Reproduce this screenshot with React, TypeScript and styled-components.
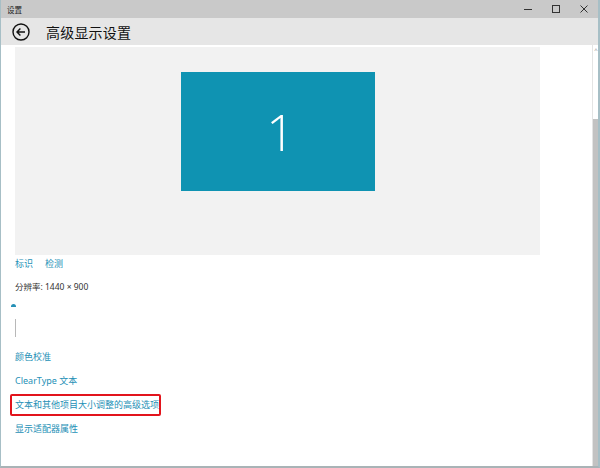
import * as React from "react";
import styled, { createGlobalStyle } from "styled-components";

const GlobalStyle = createGlobalStyle`
  html, body { margin: 0; padding: 0; background: #ffffff; }
  body { font-family: "Noto Sans", "Noto Sans CJK SC", sans-serif; }
`;

const colors = {
  titleBar: "#c9c9c9",
  header: "#e6e6e6",
  preview: "#f2f2f2",
  monitor: "#0f93b2",
  link: "#2590b6",
  text: "#333333",
  frame: "#a7bfc6",
  red: "#e2141c",
};

const Window = styled.div`
  width: 600px;
  height: 468px;
  box-sizing: border-box;
  display: flex;
  flex-direction: column;
  border-left: 1px solid ${colors.frame};
  border-right: 2px solid ${colors.frame};
  border-bottom: 2px solid #a9b3b6;
  overflow: hidden;
  font-family: "Noto Sans", "Noto Sans CJK SC", sans-serif;
`;

const TitleBar = styled.div`
  height: 18px;
  flex: none;
  background: ${colors.titleBar};
  display: flex;
  align-items: center;
  padding-left: 6px;
  font-size: 7.5px;
  color: #222;
`;

const TitleText = styled.span`
  flex: 1;
`;

const Controls = styled.div`
  display: flex;
  height: 100%;
`;

const ControlButton = styled.div`
  width: 28px;
  height: 100%;
  display: flex;
  align-items: center;
  justify-content: center;
`;

const Header = styled.div`
  height: 27px;
  flex: none;
  background: ${colors.header};
  display: flex;
  align-items: center;
  gap: 16px;
  padding-left: 11px;
`;

const PageTitle = styled.h1`
  margin: 0;
  font-size: 14px;
  font-weight: 400;
  color: #111;
  letter-spacing: 0.2px;
`;

const Body = styled.div`
  flex: 1;
  display: flex;
  min-height: 0;
`;

const Content = styled.div`
  flex: 1;
  padding: 2px 0 0 14px;
  display: flex;
  flex-direction: column;
`;

const Preview = styled.div`
  width: 525px;
  height: 208px;
  background: ${colors.preview};
  display: flex;
  justify-content: center;
  align-items: flex-start;
  padding-top: 25px;
  box-sizing: border-box;
`;

const Monitor = styled.div`
  width: 194px;
  height: 119px;
  background: ${colors.monitor};
  display: flex;
  align-items: center;
  justify-content: center;
  color: #ffffff;
  font-family: "Open Sans", "Noto Sans", sans-serif;
  font-weight: 300;
  font-size: 50px;
  padding-left: 6px;
  box-sizing: border-box;
`;

const LinkRow = styled.div`
  display: flex;
  gap: 12px;
  margin-top: 2px;
`;

const Link = styled.a`
  display: block;
  color: ${colors.link};
  font-size: 9px;
  line-height: 14px;
  text-decoration: none;
  white-space: nowrap;
`;

const Resolution = styled.div`
  margin-top: 10px;
  font-size: 8.5px;
  line-height: 12px;
  color: ${colors.text};
`;

const SliderMark = styled.div`
  width: 5px;
  height: 3px;
  margin: 11px 0 0 -4px;
  background: ${colors.link};
  border-radius: 3px 3px 0 0;
`;

const SelectEdge = styled.div`
  width: 1px;
  height: 18px;
  margin-top: 12px;
  background: #b8b8b8;
`;

const LinkList = styled.div`
  display: flex;
  flex-direction: column;
  gap: 10px;
  margin-top: 13px;
`;

const Highlight = styled.div`
  margin-left: -5px;
  width: 151px;
  height: 22px;
  box-sizing: border-box;
  border: 2px solid ${colors.red};
  border-radius: 2px;
  display: flex;
  align-items: center;
  padding-left: 3px;
  margin-top: -4px;
  margin-bottom: -4px;
`;

const RightGap = styled.div`
  width: 52px;
  flex: none;
`;

const Scrollbar = styled.div`
  width: 6px;
  flex: none;
  display: flex;
  flex-direction: column;
  border-left: 1px solid #e4e4e4;
`;

const ScrollTrack = styled.div`
  height: 72px;
  flex: none;
  display: flex;
  justify-content: center;
  padding-top: 2px;
  font-size: 6px;
  color: #888;
  line-height: 6px;
`;

const ScrollThumb = styled.div`
  flex: 1;
  background: #c2c2c2;
  border-right: 1px solid #9fa6a8;
`;

const BackIcon = () => (
  <svg width="18" height="18" viewBox="0 0 18 18">
    <circle cx="9" cy="9" r="8" fill="none" stroke="#111" strokeWidth="1.4" />
    <path d="M13 9H5.2M8.4 5.6L5 9l3.4 3.4" fill="none" stroke="#111" strokeWidth="1.4" />
  </svg>
);

const MinIcon = () => (
  <svg width="10" height="10" viewBox="0 0 10 10">
    <path d="M1 5.5h8" stroke="#333" strokeWidth="1" />
  </svg>
);

const MaxIcon = () => (
  <svg width="10" height="10" viewBox="0 0 10 10">
    <rect x="1.5" y="1.5" width="7" height="7" fill="none" stroke="#333" strokeWidth="1" />
  </svg>
);

const CloseIcon = () => (
  <svg width="10" height="10" viewBox="0 0 10 10">
    <path d="M1.5 1.5l7 7M8.5 1.5l-7 7" stroke="#333" strokeWidth="1" />
  </svg>
);

export default function App() {
  return (
    <>
      <GlobalStyle />
      <Window>
        <TitleBar>
          <TitleText>设置</TitleText>
          <Controls>
            <ControlButton><MinIcon /></ControlButton>
            <ControlButton><MaxIcon /></ControlButton>
            <ControlButton><CloseIcon /></ControlButton>
          </Controls>
        </TitleBar>
        <Header>
          <BackIcon />
          <PageTitle>高级显示设置</PageTitle>
        </Header>
        <Body>
          <Content>
            <Preview>
              <Monitor>1</Monitor>
            </Preview>
            <LinkRow>
              <Link>标识</Link>
              <Link>检测</Link>
            </LinkRow>
            <Resolution>分辨率: 1440 × 900</Resolution>
            <SliderMark />
            <SelectEdge />
            <LinkList>
              <Link>颜色校准</Link>
              <Link>ClearType 文本</Link>
              <Highlight>
                <Link>文本和其他项目大小调整的高级选项</Link>
              </Highlight>
              <Link>显示适配器属性</Link>
            </LinkList>
          </Content>
          <RightGap />
          <Scrollbar>
            <ScrollTrack>^</ScrollTrack>
            <ScrollThumb />
          </Scrollbar>
        </Body>
      </Window>
    </>
  );
}
